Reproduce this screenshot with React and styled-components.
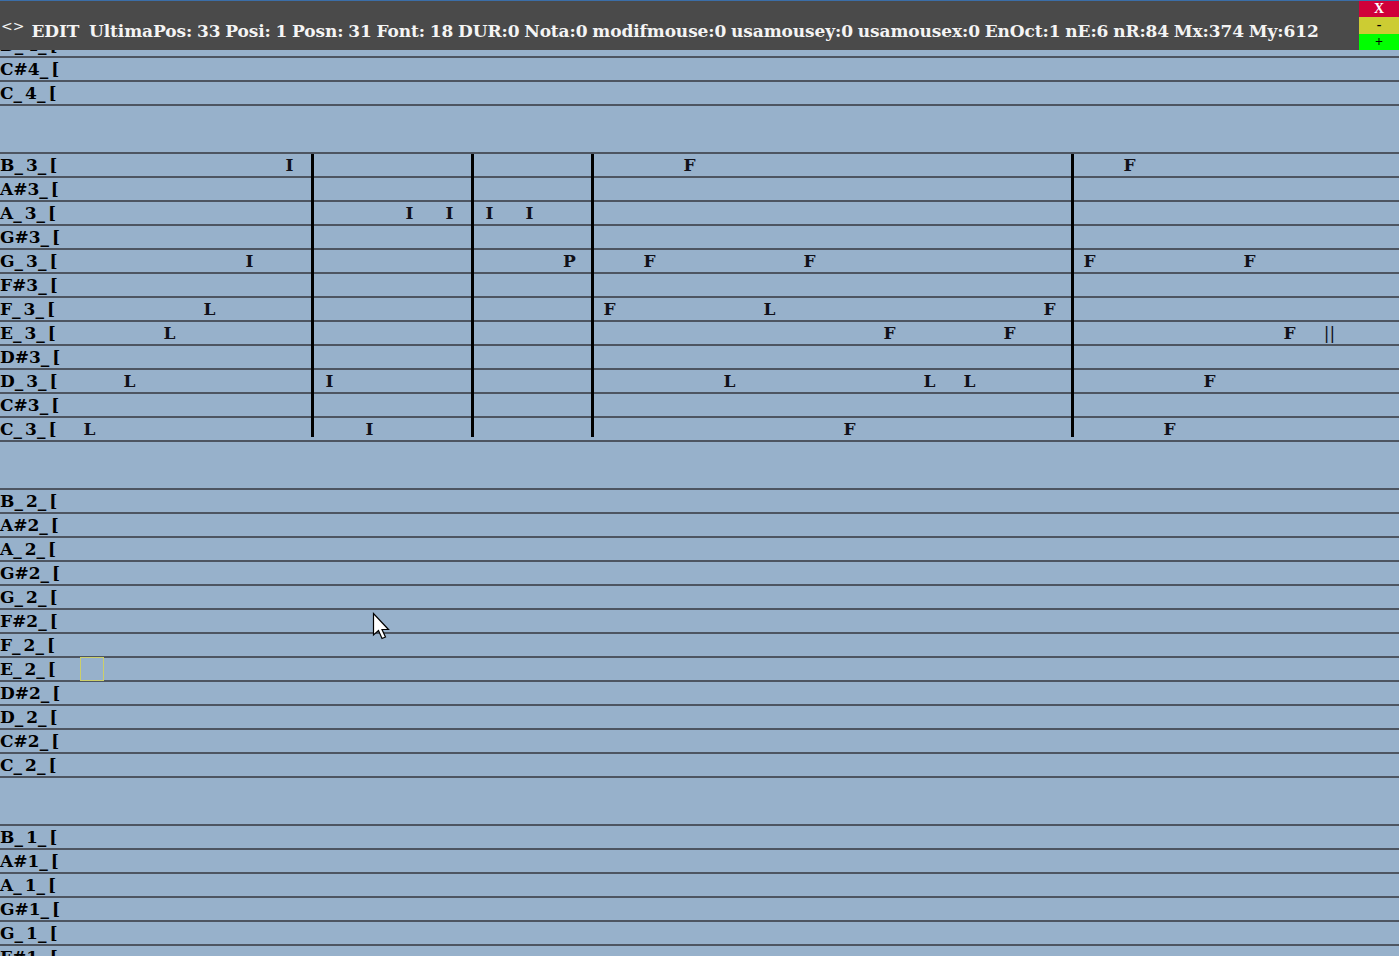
import React from 'react';
import styled, { createGlobalStyle } from 'styled-components';

const GlobalStyle = createGlobalStyle`
    html, body {
        margin: 0;
        padding: 0;
        background: #97b1cb;
        overflow: hidden;
    }
    body {
        font-family: "DejaVu Serif", "Liberation Serif", serif;
    }
`;

const NAMES = ['B', 'A#', 'A', 'G#', 'G', 'F#', 'F', 'E', 'D#', 'D', 'C#', 'C'];

// notas por fila: [columna, letra]
const NOTES = {
    B3: [[5, 'I'], [15, 'F'], [26, 'F']],
    A3: [[8, 'I'], [9, 'I'], [10, 'I'], [11, 'I']],
    G3: [[4, 'I'], [12, 'P'], [14, 'F'], [18, 'F'], [25, 'F'], [29, 'F']],
    F3: [[3, 'L'], [13, 'F'], [17, 'L'], [24, 'F']],
    E3: [[2, 'L'], [20, 'F'], [23, 'F'], [30, 'F'], [31, '||']],
    D3: [[1, 'L'], [6, 'I'], [16, 'L'], [21, 'L'], [22, 'L'], [28, 'F']],
    C3: [[0, 'L'], [7, 'I'], [19, 'F'], [27, 'F']],
};

const BARS = { 3: [6, 10, 13, 25] };

const Viewport = styled.div`
    position: relative;
    width: 100%;
    height: 100vh;
    overflow: hidden;
    background: #97b1cb;
`;

const Sheet = styled.div`
    display: flex;
    flex-direction: column;
    gap: 46px;
    margin-top: -184px;
`;

const Octave = styled.div`
    position: relative;
    border-top: 2px solid #4d5561;
`;

const Row = styled.div`
    position: relative;
    display: grid;
    grid-template-columns: 71px repeat(32, 40px);
    height: 22px;
    border-bottom: 2px solid #4d5561;
    align-items: center;
`;

const Label = styled.div`
    grid-column: 1;
    grid-row: 1;
    font-size: 17px;
    font-weight: bold;
    color: #000;
    line-height: 22px;
    white-space: nowrap;
`;

const Under = styled.span`
    display: inline-block;
    width: 11.5px;
`;

const Note = styled.div`
    grid-column: ${p => p.$col + 2};
    grid-row: 1;
    text-align: center;
    font-size: 17px;
    font-weight: ${p => (p.$thin ? 'normal' : 'bold')};
    color: #101018;
    line-height: 22px;
    padding-right: 3px;
`;

const Bar = styled.div`
    position: absolute;
    top: 0;
    bottom: 5px;
    left: ${p => 71 + p.$at * 40}px;
    width: 3px;
    background: #000;
`;

const CursorBox = styled.div`
    position: absolute;
    left: 80px;
    top: -1px;
    width: 22px;
    height: 22px;
    border: 1px solid #cccf6a;
`;

const Header = styled.div`
    position: fixed;
    top: 0;
    left: 0;
    right: 0;
    height: 50px;
    display: flex;
    background: #4a4a4a;
    border-top: 1px solid #3b6ea8;
    box-sizing: border-box;
`;

const Status = styled.div`
    flex: 1;
    display: flex;
    align-items: center;
    gap: 7px;
    padding: 10px 0 0 1px;
    color: #f4f4f4;
    white-space: nowrap;
    overflow: hidden;
`;

const Arrows = styled.span`
    font-family: "DejaVu Sans", sans-serif;
    font-size: 14px;
    margin-top: -10px;
`;

const StatusText = styled.span`
    font-size: 17px;
    font-weight: bold;
    letter-spacing: -0.1px;
    word-spacing: -1px;
`;

const Buttons = styled.div`
    width: 40px;
    display: flex;
    flex-direction: column;
`;

const WinButton = styled.div`
    flex: 1;
    display: flex;
    align-items: center;
    justify-content: center;
    background: ${p => p.$bg};
    color: ${p => p.$fg};
    font-family: "Liberation Serif", serif;
    font-weight: bold;
    font-size: 14px;
    line-height: 1;
`;

const Pointer = styled.svg`
    position: fixed;
    left: 372px;
    top: 612px;
    pointer-events: none;
`;

function NoteLabel({ name, oct }) {
    if (name.length > 1) return <Label>{name}{oct}<Under>_</Under>[</Label>;
    return <Label>{name}<Under>_</Under>{oct}<Under>_</Under>[</Label>;
}

function OctaveBlock({ oct }) {
    return (
        <Octave>
            {NAMES.map(name => {
                const key = `${name}${oct}`;
                const notes = NOTES[key] || [];
                return (
                    <Row key={key}>
                        <NoteLabel name={name} oct={oct} />
                        {notes.map(([col, txt]) => (
                            <Note key={col} $col={col} $thin={txt === '||'}>{txt}</Note>
                        ))}
                        {key === 'E2' && <CursorBox />}
                    </Row>
                );
            })}
            {(BARS[oct] || []).map(b => <Bar key={b} $at={b} />)}
        </Octave>
    );
}

export default function App() {
    return (
        <>
            <GlobalStyle />
            <Viewport>
                <Sheet>
                    {[4, 3, 2, 1].map(o => <OctaveBlock key={o} oct={o} />)}
                </Sheet>
                <Header>
                    <Status>
                        <Arrows>&lt;&gt;</Arrows>
                        <StatusText>
                            EDIT&nbsp; UltimaPos: 33 Posi: 1 Posn: 31 Font: 18 DUR:0 Nota:0 modifmouse:0 usamousey:0 usamousex:0 EnOct:1 nE:6 nR:84 Mx:374 My:612
                        </StatusText>
                    </Status>
                    <Buttons>
                        <WinButton $bg="#d0003a" $fg="#fff">X</WinButton>
                        <WinButton $bg="#cccc33" $fg="#000">-</WinButton>
                        <WinButton $bg="#00ff00" $fg="#000">+</WinButton>
                    </Buttons>
                </Header>
                <Pointer width="20" height="30" viewBox="0 0 20 30">
                    <path d="M1.5 1.5 L1.5 23 L6.5 18.5 L10 26.5 L13.5 25 L10 17.5 L16.5 17.5 Z" fill="#fff" stroke="#000" strokeWidth="1.2" strokeLinejoin="miter" />
                </Pointer>
            </Viewport>
        </>
    );
}
